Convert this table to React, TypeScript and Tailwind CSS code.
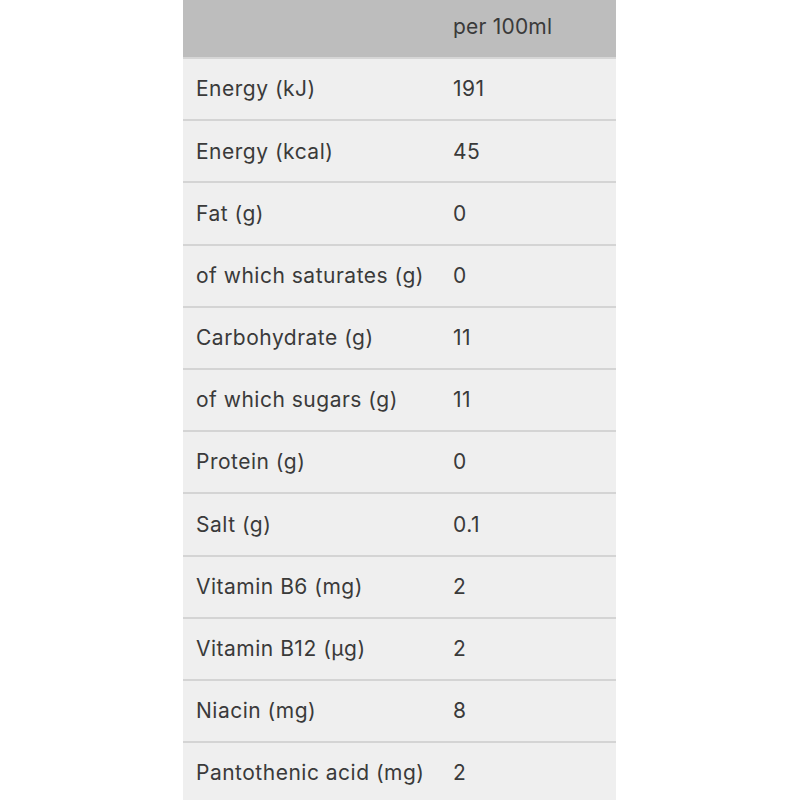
const ROWS: [string, string][] = [
  ["Energy (kJ)", "191"],
  ["Energy (kcal)", "45"],
  ["Fat (g)", "0"],
  ["of which saturates (g)", "0"],
  ["Carbohydrate (g)", "11"],
  ["of which sugars (g)", "11"],
  ["Protein (g)", "0"],
  ["Salt (g)", "0.1"],
  ["Vitamin B6 (mg)", "2"],
  ["Vitamin B12 (µg)", "2"],
  ["Niacin (mg)", "8"],
  ["Pantothenic acid (mg)", "2"],
];

export default function App() {
  return (
    <div className="min-h-screen bg-white font-['Inter',sans-serif] text-[#3a3a3a]">
      <div className="ml-[183px] w-[433px]">
        <div className="flex h-[59px] items-center border-b-2 border-[#d6d6d6] bg-[#bdbdbd] text-[21px] tracking-[0.2px]">
          <div className="w-[270px]" />
          <div className="pb-[3px]">per 100ml</div>
        </div>
        {ROWS.map(([label, value], i) => (
          <div
            key={i}
            className="flex h-[62.2px] items-center border-b-2 border-[#d4d4d4] bg-[#efefef] text-[21px] tracking-[0.5px]"
          >
            <div className="w-[270px] pl-[13px]">{label}</div>
            <div>{value}</div>
          </div>
        ))}
      </div>
    </div>
  );
}
